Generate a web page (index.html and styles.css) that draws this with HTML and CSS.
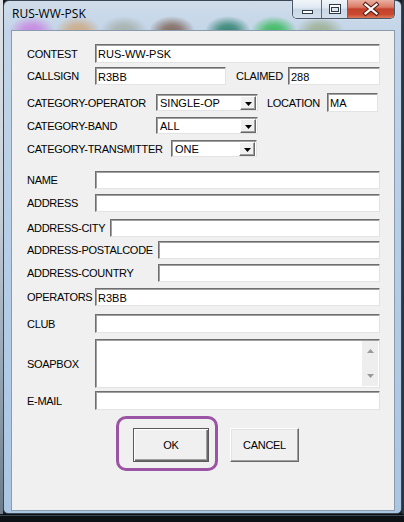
FILE: index.html
```html
<!DOCTYPE html>
<html>
<head>
<meta charset="utf-8">
<title>RUS-WW-PSK</title>
<link rel="stylesheet" href="styles.css">
</head>
<body>
<div class="desk">
  <div class="behind"></div>
  <div class="window">
    <div class="titlebar">
      <span class="title">RUS-WW-PSK</span>
      <div class="caption">
        <span class="cbtn cbtn--min"><svg width="29" height="18" viewBox="0 0 29 18"><rect x="9.5" y="10.5" width="10" height="3" fill="#fff" stroke="#2f3a48"/></svg></span>
        <span class="cbtn cbtn--max"><svg width="26" height="18" viewBox="0 0 26 18"><rect x="7.5" y="4.5" width="11" height="9" fill="#fff" stroke="#2f3a48"/><rect x="9.5" y="7.5" width="7" height="4" fill="#dfe7f0" stroke="#2f3a48"/></svg></span>
        <span class="cbtn cbtn--close"><svg width="47" height="18" viewBox="0 0 47 18"><path d="M17.5 4.5 L28.5 13.5 M28.5 4.5 L17.5 13.5" stroke="#5a1e14" stroke-width="4.2" stroke-linecap="square"/><path d="M17.5 4.5 L28.5 13.5 M28.5 4.5 L17.5 13.5" stroke="#fff" stroke-width="2.2" stroke-linecap="square"/></svg></span>
      </div>
    </div>
    <div class="client">
      <div class="row">
        <span class="lbl w68">CONTEST</span>
        <div class="edit h19 grow">RUS-WW-PSK</div>
      </div>
      <div class="row mt4">
        <span class="lbl w68">CALLSIGN</span>
        <div class="edit h18 wcall">R3BB</div>
        <span class="lbl lbl--claimed">CLAIMED</span>
        <div class="edit h18 grow">288</div>
      </div>
      <div class="row mt8">
        <span class="lbl w129">CATEGORY-OPERATOR</span>
        <div class="combo wcombo">SINGLE-OP<span class="drop"><svg width="7" height="4" viewBox="0 0 7 4"><path d="M0 0 H7 L3.5 4 Z" fill="#000"/></svg></span></div>
        <span class="lbl lbl--location">LOCATION</span>
        <div class="edit h19 wloc">MA</div>
      </div>
      <div class="row mt5">
        <span class="lbl w129">CATEGORY-BAND</span>
        <div class="combo wcombo">ALL<span class="drop"><svg width="7" height="4" viewBox="0 0 7 4"><path d="M0 0 H7 L3.5 4 Z" fill="#000"/></svg></span></div>
      </div>
      <div class="row mt6">
        <span class="lbl w144">CATEGORY-TRANSMITTER</span>
        <div class="combo wcombo2">ONE<span class="drop"><svg width="7" height="4" viewBox="0 0 7 4"><path d="M0 0 H7 L3.5 4 Z" fill="#000"/></svg></span></div>
      </div>
      <div class="row mt14">
        <span class="lbl w68">NAME</span>
        <div class="edit h18 grow"></div>
      </div>
      <div class="row mt5">
        <span class="lbl w68">ADDRESS</span>
        <div class="edit h18 grow"></div>
      </div>
      <div class="row mt7">
        <span class="lbl w83">ADDRESS-CITY</span>
        <div class="edit h18 grow"></div>
      </div>
      <div class="row mt4">
        <span class="lbl w131">ADDRESS-POSTALCODE</span>
        <div class="edit h18 grow"></div>
      </div>
      <div class="row mt5">
        <span class="lbl w131">ADDRESS-COUNTRY</span>
        <div class="edit h18 grow"></div>
      </div>
      <div class="row mt6">
        <span class="lbl w68">OPERATORS</span>
        <div class="edit h18 grow">R3BB</div>
      </div>
      <div class="row mt8">
        <span class="lbl w68">CLUB</span>
        <div class="edit h19 grow"></div>
      </div>
      <div class="row mt6">
        <span class="lbl w68">SOAPBOX</span>
        <div class="memo grow">
          <div class="memo-text"></div>
          <div class="vscroll">
            <svg width="7" height="4" viewBox="0 0 7 4"><path d="M0 4 H7 L3.5 0 Z" fill="#9a9a9a"/></svg>
            <svg width="7" height="4" viewBox="0 0 7 4"><path d="M0 0 H7 L3.5 4 Z" fill="#9a9a9a"/></svg>
          </div>
        </div>
      </div>
      <div class="row mt3">
        <span class="lbl w68">E-MAIL</span>
        <div class="edit h19 grow"></div>
      </div>
      <div class="buttons">
        <div class="focusring">
          <button class="btn btn--default">OK</button>
        </div>
        <button class="btn btn--cancel">CANCEL</button>
      </div>
    </div>
  </div>
  <div class="behind-right"></div>
</div>
</body>
</html>
```

FILE: styles.css
```css
* { box-sizing: border-box; }
html, body { margin: 0; padding: 0; }
body {
  width: 404px;
  height: 522px;
  overflow: hidden;
  background: #141a20;
  font-family: "Liberation Sans", Arial, sans-serif;
}
.desk {
  display: flex;
  height: 522px;
  align-items: flex-start;
  background: linear-gradient(to bottom, transparent 0, transparent 513px, #0d1116 513px, #0d1116 515px, #3c4650 515px, #3c4650 516px, #0d1116 516px);
}
.behind {
  width: 3px;
  height: 514px;
  background: linear-gradient(to bottom, #dfe3e8 0, #c9d0d8 40%, #9aa7b5 70%, #6e7b88 100%);
}
.behind-right {
  width: 2px;
  height: 514px;
  background: #2c3440;
}
.window {
  width: 399px;
  height: 514px;
  border: 1px solid #3a4656;
  border-radius: 6px 6px 5px 5px;
  padding: 0 6px 2px 7px;
  display: flex;
  flex-direction: column;
  background:
    radial-gradient(ellipse 23px 15px at 28px 30px, rgba(200,130,225,0.9) 0, rgba(200,130,225,0.75) 40%, rgba(200,130,225,0) 100%),
    radial-gradient(ellipse 23px 15px at 74px 30px, rgba(205,165,120,0.85) 0, rgba(205,165,120,0.7) 40%, rgba(205,165,120,0) 100%),
    radial-gradient(ellipse 24px 15px at 120px 30px, rgba(160,168,160,0.8) 0, rgba(160,168,160,0.65) 40%, rgba(160,168,160,0) 100%),
    radial-gradient(ellipse 23px 15px at 168px 30px, rgba(120,90,75,0.85) 0, rgba(120,90,75,0.7) 40%, rgba(120,90,75,0) 100%),
    radial-gradient(ellipse 23px 15px at 224px 30px, rgba(40,125,105,0.9) 0, rgba(40,125,105,0.75) 40%, rgba(40,125,105,0) 100%),
    radial-gradient(ellipse 23px 15px at 270px 30px, rgba(50,185,85,0.9) 0, rgba(50,185,85,0.75) 40%, rgba(50,185,85,0) 100%),
    radial-gradient(ellipse 24px 15px at 316px 30px, rgba(150,168,130,0.8) 0, rgba(150,168,130,0.65) 40%, rgba(150,168,130,0) 100%),
    linear-gradient(to bottom, #cfdcea 0, #c3d5e8 30px, #b8cfe7 200px, #aac6e3 100%);
}
.titlebar {
  height: 29px;
  display: flex;
  justify-content: space-between;
  align-items: flex-start;
  flex: 0 0 auto;
}
.title {
  padding: 5px 0 0 1px;
  font-family: "Open Sans", "Noto Sans", sans-serif;
  font-size: 12px;
  line-height: 16px;
  color: #000;
}
.caption {
  display: flex;
  margin-top: -1px;
  height: 19px;
  border: 1px solid #4a5869;
  border-top: 0;
  border-radius: 0 0 5px 5px;
  overflow: hidden;
  box-shadow: 0 0 2px rgba(255,255,255,0.7);
}
.cbtn {
  display: block;
  height: 18px;
  border-right: 1px solid #5d6c7e;
  background: linear-gradient(to bottom, #f1f5fa 0, #dfe8f2 45%, #c9d7e6 50%, #d3dfeb 100%);
}
.cbtn svg { display: block; }
.cbtn--min { width: 29px; }
.cbtn--max { width: 26px; }
.cbtn--close {
  width: 46px;
  border-right: 0;
  background: linear-gradient(to bottom, #eab0a2 0, #da7b65 40%, #c4412b 50%, #c9492f 80%, #dc7a5c 100%);
}
.client {
  flex: 1 1 auto;
  border: 1px solid #8a9bae;
  background: #f0f0f0;
  padding: 13px 14px 0 15px;
  display: flex;
  flex-direction: column;
}
.row {
  display: flex;
  align-items: center;
}
.mt3 { margin-top: 3px; }
.mt4 { margin-top: 4px; }
.mt5 { margin-top: 5px; }
.mt6 { margin-top: 6px; }
.mt7 { margin-top: 7px; }
.mt8 { margin-top: 8px; }
.mt14 { margin-top: 14px; }
.lbl {
  flex: 0 0 auto;
  font-size: 11px;
  letter-spacing: -0.3px;
  line-height: 12px;
  color: #000;
  white-space: nowrap;
}
.w68 { width: 68px; }
.w83 { width: 83px; }
.w129 { width: 129px; }
.w131 { width: 131px; }
.w144 { width: 144px; }
.lbl--claimed { width: 52px; margin-left: 10px; }
.lbl--location { width: 60px; margin-left: 9px; }
.edit, .combo, .memo {
  background: #fff;
  border: 1px solid;
  border-color: #6e6e6e #e3e3e3 #e3e3e3 #6e6e6e;
  box-shadow: inset 1px 1px 0 #a0a0a0;
  font-size: 11px;
  color: #000;
  display: flex;
  align-items: center;
  padding: 1px 0 0 2px;
  white-space: nowrap;
}
.h18 { height: 18px; }
.h19 { height: 19px; }
.grow { flex: 1 1 auto; }
.wcall { width: 131px; flex: 0 0 auto; }
.wloc { width: 51px; flex: 0 0 auto; }
.combo {
  height: 17px;
  justify-content: space-between;
  padding: 0 1px 0 3px;
  flex: 0 0 auto;
}
.wcombo { width: 102px; }
.wcombo2 { width: 86px; }
.drop {
  width: 16px;
  height: 14px;
  margin-top: 1px;
  background: #f0f0f0;
  border: 1px solid;
  border-color: #fff #696969 #696969 #fff;
  box-shadow: inset -1px -1px 0 #a0a0a0;
  display: flex;
  align-items: center;
  justify-content: center;
}
.drop svg { display: block; margin: 1px 0 0 0; }
.memo {
  height: 49px;
  padding: 1px 1px 1px 2px;
  align-items: stretch;
}
.memo-text { flex: 1 1 auto; }
.vscroll {
  width: 16px;
  background: #eeeeee;
  display: flex;
  flex-direction: column;
  justify-content: space-between;
  align-items: center;
  padding: 8px 0 8px 0;
}
.vscroll svg { display: block; }
.buttons {
  display: flex;
  align-items: flex-start;
  margin-top: 6px;
  padding-left: 89px;
}
.focusring {
  width: 102px;
  height: 55px;
  border: 3px solid #9b54a3;
  border-radius: 10px;
  padding: 9px 0 0 14px;
}
.btn {
  font-family: "Liberation Sans", Arial, sans-serif;
  font-size: 11px;
  letter-spacing: -0.3px;
  color: #000;
  background: #f0f0f0;
  height: 34px;
  padding: 0;
  margin: 0;
  border: 1px solid;
  border-color: #fff #696969 #696969 #fff;
  box-shadow: inset -1px -1px 0 #a0a0a0, inset 1px 1px 0 #e3e3e3;
}
.btn--default {
  width: 76px;
  border-color: #5a5a5a;
  box-shadow: inset 1px 1px 0 #fff, inset -1px -1px 0 #696969, inset -2px -2px 0 #a0a0a0;
}
.btn--cancel {
  width: 69px;
  margin: 12px 0 0 12px;
}
```
